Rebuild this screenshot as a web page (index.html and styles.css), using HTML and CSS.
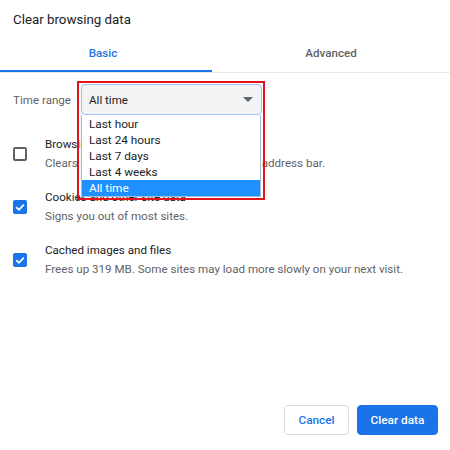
FILE: index.html
```html
<!DOCTYPE html>
<html>
<head>
<meta charset="utf-8">
<link rel="stylesheet" href="styles.css">
</head>
<body>
<div class="dialog">
  <div class="title">Clear browsing data</div>
  <div class="tabs">
    <div class="tab active"><span>Basic</span></div>
    <div class="tab"><span>Advanced</span></div>
  </div>
  <div class="range-row">
    <span class="range-label">Time range</span>
    <div class="select">
      <span>All time</span>
      <span class="arrow"></span>
    </div>
  </div>
  <div class="items">
    <div class="item">
      <span class="box"></span>
      <div class="texts">
        <div class="primary">Browsing history</div>
        <div class="secondary">Clears history and autocompletions in the address bar.</div>
      </div>
    </div>
    <div class="item">
      <span class="box checked"><svg viewBox="0 0 14 14" width="14" height="14"><path d="M3.2 7.2 L5.9 9.8 L10.9 4.6" fill="none" stroke="#fff" stroke-width="1.8"/></svg></span>
      <div class="texts">
        <div class="primary">Cookies and other site data</div>
        <div class="secondary">Signs you out of most sites.</div>
      </div>
    </div>
    <div class="item">
      <span class="box checked"><svg viewBox="0 0 14 14" width="14" height="14"><path d="M3.2 7.2 L5.9 9.8 L10.9 4.6" fill="none" stroke="#fff" stroke-width="1.8"/></svg></span>
      <div class="texts">
        <div class="primary">Cached images and files</div>
        <div class="secondary">Frees up 319 MB. Some sites may load more slowly on your next visit.</div>
      </div>
    </div>
  </div>
  <div class="footer">
    <button class="btn cancel">Cancel</button>
    <button class="btn primary-btn">Clear data</button>
  </div>
  <div class="dropdown">
    <div class="opt">Last hour</div>
    <div class="opt">Last 24 hours</div>
    <div class="opt">Last 7 days</div>
    <div class="opt">Last 4 weeks</div>
    <div class="opt selected">All time</div>
  </div>
  <div class="highlight"></div>
</div>
</body>
</html>
```
FILE: styles.css
```css
html, body {
  margin: 0;
  padding: 0;
  background: #fff;
}
.dialog {
  position: relative;
  width: 450px;
  height: 450px;
  display: flex;
  flex-direction: column;
  font-family: Roboto, "Liberation Sans", sans-serif;
  color: #202124;
  font-size: 11.6px;
}
.title {
  padding: 10px 12px 0 13px;
  height: 19px;
  line-height: 19px;
  font-size: 13.3px;
}
.tabs {
  display: flex;
  height: 43px;
  border-bottom: 1px solid #e8eaed;
}
.tab {
  display: flex;
  align-items: center;
  justify-content: center;
  flex: 1;
  font-weight: 500;
  color: #5f6368;
  padding-top: 5px;
  box-sizing: border-box;
}
.tab.active {
  flex: 0 0 212px;
  padding-right: 6px;
  color: #1a73e8;
  box-shadow: inset 0 -2px 0 #1a73e8;
}
.range-row {
  display: flex;
  align-items: center;
  margin-top: 11px;
  padding-left: 13px;
  height: 31px;
}
.range-label {
  color: #5f6368;
  width: 68px;
}
.select {
  box-sizing: border-box;
  width: 181px;
  height: 31px;
  background: #f1f3f4;
  border: 1px solid #9ec2f7;
  border-radius: 4px;
  display: flex;
  align-items: center;
  justify-content: space-between;
  padding: 0 8px 0 7px;
}
.arrow {
  width: 0;
  height: 0;
  border-left: 5px solid transparent;
  border-right: 5px solid transparent;
  border-top: 5px solid #5f6368;
}
.items {
  display: flex;
  flex-direction: column;
  gap: 15px;
  margin-top: 20px;
}
.item {
  display: flex;
  align-items: center;
  padding-left: 13px;
  height: 38px;
}
.box {
  box-sizing: border-box;
  width: 14px;
  height: 14px;
  border: 2px solid #5f6368;
  border-radius: 2px;
  margin-right: 18px;
  flex: none;
  display: flex;
}
.box.checked {
  border: none;
  background: #1a73e8;
}
.texts {
  line-height: 19px;
}
.primary {
  color: #202124;
}
.secondary {
  color: #5f6368;
}
.footer {
  margin-top: auto;
  display: flex;
  justify-content: flex-end;
  gap: 8px;
  padding: 0 12px 15px 0;
}
.btn {
  height: 30px;
  border-radius: 4px;
  font-family: Roboto, "Liberation Sans", sans-serif;
  font-size: 11.8px;
  font-weight: 500;
  padding: 0;
  box-sizing: border-box;
}
.cancel {
  width: 65px;
  background: #fff;
  color: #1a73e8;
  border: 1px solid #dadce0;
}
.primary-btn {
  width: 81px;
  background: #1a73e8;
  color: #fff;
  border: 1px solid #1a73e8;
}
.dropdown {
  position: absolute;
  left: 81px;
  top: 115px;
  width: 180px;
  box-sizing: border-box;
  background: #fff;
  border: 1px solid #a5bcd6;
  border-top: none;
  padding-top: 1px;
}
.opt {
  height: 16px;
  line-height: 16px;
  padding-left: 7px;
  color: #202124;
  font-size: 11.8px;
}
.opt.selected {
  background: #1e90ff;
  color: #fff;
}
.highlight {
  position: absolute;
  left: 77px;
  top: 81px;
  width: 188px;
  height: 119px;
  box-sizing: border-box;
  border: 2px solid #e3131b;
}
```
